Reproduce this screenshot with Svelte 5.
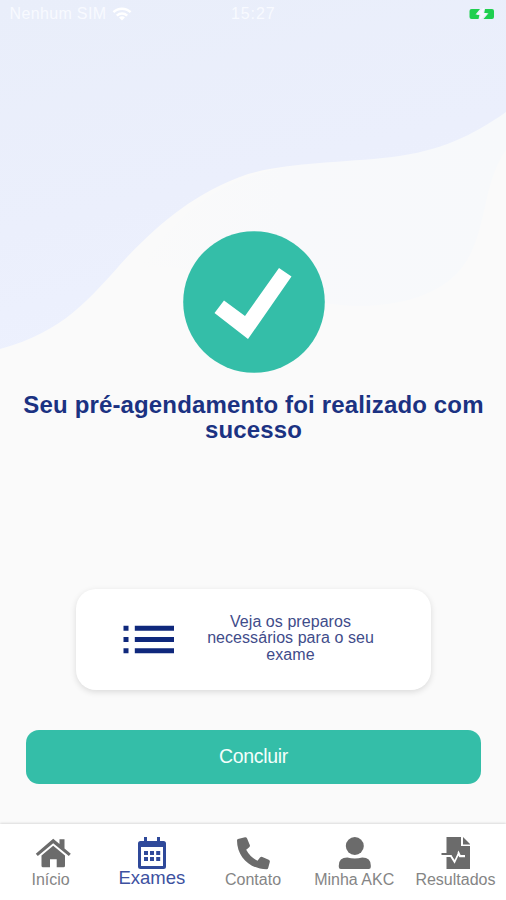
<script lang="ts">
  const tabs = [
    { id: 'home', label: 'Início' },
    { id: 'exams', label: 'Exames' },
    { id: 'contact', label: 'Contato' },
    { id: 'profile', label: 'Minha AKC' },
    { id: 'results', label: 'Resultados' }
  ]

  let active = $state('exams')
</script>

<div class="screen">
  <svg class="backdrop" viewBox="0 0 506 420" aria-hidden="true">
    <defs>
      <linearGradient id="wave" x1="0" y1="0" x2="0.35" y2="1">
        <stop offset="0" stop-color="#e9eefa" />
        <stop offset="0.6" stop-color="#ebeffc" />
        <stop offset="1" stop-color="#edf1fe" />
      </linearGradient>
      <linearGradient id="glow" x1="0" y1="0" x2="1" y2="0">
        <stop offset="0" stop-color="#fafafa" />
        <stop offset="0.4" stop-color="#f8f9fb" />
        <stop offset="1" stop-color="#f7f9fb" />
      </linearGradient>
    </defs>
    <path d="M506 112V150C478 190 490 245 452 278C425 302 375 311 325 303C250 292 190 260 140 268C200 180 260 165 350 160Z" fill="url(#glow)" />
    <path d="M0 0H506V112C472 136 440 151 392 157C340 163 290 162 248 174C196 192 162 221 128 256C88 300 65 331 0 349Z" fill="url(#wave)" />
  </svg>

  <header class="status">
    <div class="carrier">
      <span>Nenhum SIM</span>
      <svg width="20" height="14" viewBox="0 0 20 14" fill="none" stroke="#fff" stroke-width="2.4">
        <path d="M1.4 5.2C6.2 .5 13.8 .5 18.6 5.2" />
        <path d="M4.8 8.6C7.8 5.8 12.2 5.8 15.2 8.6" />
        <path d="M7 10.4C8.8 9 11.2 9 13 10.4L10 13.5Z" fill="#fff" stroke="none" />
      </svg>
    </div>
    <span class="clock">15:27</span>
    <svg class="battery" width="26" height="12" viewBox="0 0 26 12">
      <path d="M2.5 1H11L6.5 6.5H10.5L9.5 11H2.5Q.5 11 .5 9V3Q.5 1 2.5 1Z" fill="#20cf50" />
      <path d="M16 1H23Q25 1 25 3V9Q25 11 23 11H14.5L19.5 5.2H15.2Z" fill="#20cf50" />
      <path d="M14.2 0L7.5 6.8H12L10.5 12L18.3 5H13.8L15.5 0Z" fill="#f6f8ff" />
    </svg>
  </header>

  <main>
    <svg class="check" width="142" height="142" viewBox="0 0 142 142">
      <circle cx="71" cy="71" r="70.8" fill="#34bea8" />
      <path d="M41 69.5L62 85L96 37L108.500 45.500L65 108L31.5 82Z" fill="#fff" />
    </svg>

    <h1>Seu pré-agendamento foi realizado com sucesso</h1>

    <button class="card">
      <svg width="52" height="30" viewBox="0 0 52 30" fill="#0f287c">
        <path d="M.5 .8h5v5h-5zM.5 12h5v5h-5zM.5 23.2h5v5h-5z" />
        <path d="M11.8 .8H51v5H11.8zM11.8 12H51v5H11.8zM11.8 23.2H51v5H11.8z" />
      </svg>
      <span>Veja os preparos necessários para o seu exame</span>
    </button>

    <button class="submit">Concluir</button>
  </main>

  <nav>
    {#each tabs as tab}
      <button class="tab" class:active={active === tab.id} onclick={() => (active = tab.id)}>
        <svg width="36" height="34" viewBox="0 0 36 34" fill="currentColor">
          {#if tab.id === 'home'}
            <g transform="translate(2.5 .2)">
              <path d="M17.7 1.5L24 6.9V2H29V11.2L35.3 16.6L33.3 18.9L17.7 6L2.3 18.9L.3 16.6Z" />
              <path d="M17.7 8.5L29.5 18.2V28.5Q29.5 30 28 30H21.2V22H14.5V30H7.5Q6 30 6 28.5V18.2Z" />
            </g>
          {:else if tab.id === 'exams'}
            <path fill-rule="evenodd" d="M10 0H13V4H23V0H26V4H29.5Q32 4 32 6.5V29.5Q32 32 29.5 32H6.5Q4 32 4 29.5V6.5Q4 4 6.5 4H10ZM7 10V29H29V10Z" />
            <path d="M10 14h4v4h-4zM16 14h4v4h-4zM22.2 14h4v4h-4zM10 20h4v4h-4zM16 20h4v4h-4zM22.2 20h4v4h-4z" />
          {:else if tab.id === 'contact'}
            <path d="M3 2L10 .2Q11.5 0 12.1 1.4L14.8 8Q15.3 9.3 14.2 10.3L11.2 12.8Q15 20 22.5 23.8L25 20.5Q26 19.4 27.3 19.9L33.7 22.7Q35.2 23.4 34.8 25L33.2 31Q32.9 32.2 31.5 32.2C15 32.2 2 19.5 2 3.4Q2 2.3 3 2Z" />
          {:else if tab.id === 'profile'}
            <g transform="translate(.8 0)">
              <circle cx="18" cy="9" r="9" />
              <path d="M2 30V28.5Q2 20.5 10.5 20.5Q18 22.5 25.5 20.5Q34 20.5 34 28.5V30Q34 32 32 32H4Q2 32 2 30Z" />
            </g>
          {:else}
            <path d="M9.5 0H24V9H33V32H9.5Z" />
            <path d="M26 0L33 7V7.5H26Z" />
            <path d="M8 18.8H14L17.5 24.5L21.5 16L23 19.2H28" fill="none" stroke="#fff" stroke-width="2.2" />
            <path d="M4.5 17H15L17.5 21L20 15.5" fill="none" stroke="currentColor" stroke-width="1.8" />
          {/if}
        </svg>
        <span>{tab.label}</span>
      </button>
    {/each}
  </nav>
</div>

<style>
  :global(body) {
    background: #fafafa;
  }

  .screen {
    position: relative;
    display: flex;
    flex-direction: column;
    height: 900px;
    overflow: hidden;
    background: #fafafa;
    font-family: 'Liberation Sans', Arial, sans-serif;
  }

  .backdrop {
    position: absolute;
    top: 0;
    left: 0;
    width: 100%;
  }

  button {
    border: 0;
    padding: 0;
    font-family: inherit;
    cursor: pointer;
  }

  .status {
    position: relative;
    display: grid;
    grid-template-columns: 1fr auto 1fr;
    align-items: center;
    height: 28px;
    padding: 0 11px 0 9.5px;
    color: #f8faff;
    font-size: 16px;
    letter-spacing: 0.35px;
  }

  .carrier {
    display: flex;
    align-items: center;
    gap: 6px;
  }

  .clock {
    margin-left: 2px;
    letter-spacing: 0.9px;
  }

  .battery {
    justify-self: end;
  }

  main {
    position: relative;
    flex: 1;
    display: flex;
    flex-direction: column;
    align-items: center;
    padding: 203px 25px 0 26px;
  }

  .check {
    flex: none;
  }

  h1 {
    width: 480px;
    margin: 20px 0 0;
    color: #1b3282;
    font-size: 24px;
    line-height: 24.5px;
    letter-spacing: 0.15px;
    text-align: center;
  }

  .card {
    display: flex;
    align-items: center;
    width: 355px;
    height: 101px;
    margin-top: 147px;
    padding: 0 47px;
    gap: 22px;
    border-radius: 20px;
    background: #fff;
    box-shadow: 0 2px 6px rgba(0, 0, 0, 0.13);
    color: #3f4c8a;
    font-size: 16px;
    line-height: 16.3px;
    letter-spacing: 0.06px;
  }

  .card svg {
    flex: none;
  }

  .card span {
    width: 190px;
    margin-bottom: 2px;
    text-align: center;
  }

  .submit {
    align-self: stretch;
    height: 54px;
    margin-top: 40px;
    padding-bottom: 1px;
    border-radius: 13px;
    background: #34bea8;
    color: #f3fffc;
    font-size: 19.5px;
    letter-spacing: -0.3px;
  }

  nav {
    position: relative;
    display: flex;
    height: 76px;
    background: #fff;
    box-shadow: 0 -1px 2px rgba(0, 0, 0, 0.12);
  }

  .tab {
    flex: 1 0 0;
    display: flex;
    flex-direction: column;
    align-items: center;
    padding-top: 13px;
    background: none;
    color: #6b6b6b;
    font-size: 16px;
    line-height: 18px;
    white-space: nowrap;
  }

  .tab svg {
    overflow: visible;
  }

  .tab span {
    color: #858585;
  }

  .tab.active {
    color: #2f499a;
    font-size: 18.5px;
  }

  .tab.active span {
    margin-top: -2px;
    color: #3d519f;
  }
</style>
